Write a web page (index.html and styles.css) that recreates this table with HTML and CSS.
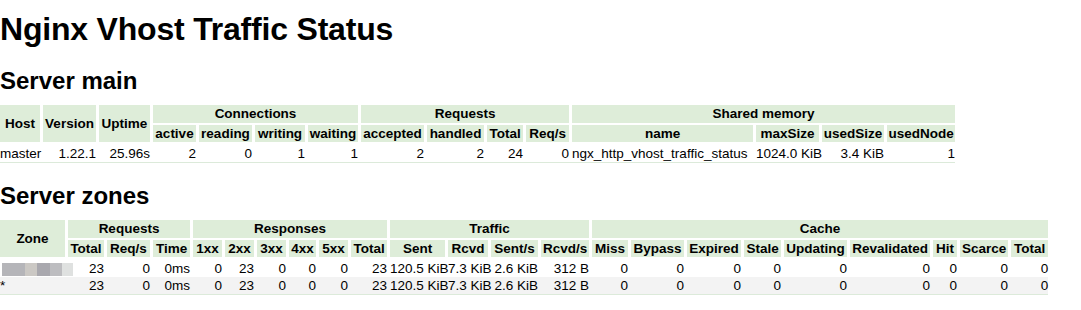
FILE: index.html
```html
<!DOCTYPE html>
<html lang="en">
<head>
<meta charset="utf-8">
<title>Nginx Vhost Traffic Status</title>
<link rel="stylesheet" href="styles.css">
</head>
<body>
<h1>Nginx Vhost Traffic Status</h1>

<h2>Server main</h2>
<table class="tbl main">
  <colgroup>
    <col><col><col><col><col><col><col><col><col><col><col><col><col><col><col>
  </colgroup>
  <thead>
    <tr>
      <th rowspan="2">Host</th>
      <th rowspan="2">Version</th>
      <th rowspan="2">Uptime</th>
      <th colspan="4">Connections</th>
      <th colspan="4">Requests</th>
      <th colspan="4">Shared memory</th>
    </tr>
    <tr>
      <th>active</th><th>reading</th><th>writing</th><th>waiting</th>
      <th>accepted</th><th>handled</th><th>Total</th><th>Req/s</th>
      <th>name</th><th>maxSize</th><th>usedSize</th><th>usedNode</th>
    </tr>
  </thead>
  <tbody>
    <tr>
      <td class="left">master</td>
      <td>1.22.1</td>
      <td>25.96s</td>
      <td>2</td><td>0</td><td>1</td><td>1</td>
      <td>2</td><td>2</td><td>24</td><td>0</td>
      <td class="left">ngx_http_vhost_traffic_status</td>
      <td>1024.0 KiB</td><td>3.4 KiB</td><td>1</td>
    </tr>
  </tbody>
</table>

<h2 class="zones-title">Server zones</h2>
<table class="tbl zones">
  <colgroup>
    <col><col><col><col><col><col><col><col><col><col><col><col><col><col><col><col><col><col><col><col><col><col><col>
  </colgroup>
  <thead>
    <tr>
      <th rowspan="2">Zone</th>
      <th colspan="3">Requests</th>
      <th colspan="6">Responses</th>
      <th colspan="4">Traffic</th>
      <th colspan="9">Cache</th>
    </tr>
    <tr>
      <th>Total</th><th>Req/s</th><th>Time</th>
      <th>1xx</th><th>2xx</th><th>3xx</th><th>4xx</th><th>5xx</th><th>Total</th>
      <th>Sent</th><th>Rcvd</th><th>Sent/s</th><th>Rcvd/s</th>
      <th>Miss</th><th>Bypass</th><th>Expired</th><th>Stale</th><th>Updating</th><th>Revalidated</th><th>Hit</th><th>Scarce</th><th>Total</th>
    </tr>
  </thead>
  <tbody>
    <tr>
      <td class="left"><span class="redact"></span></td>
      <td>23</td><td>0</td><td>0ms</td>
      <td>0</td><td>23</td><td>0</td><td>0</td><td>0</td><td>23</td>
      <td>120.5 KiB</td><td>7.3 KiB</td><td>2.6 KiB</td><td>312 B</td>
      <td>0</td><td>0</td><td>0</td><td>0</td><td>0</td><td>0</td><td>0</td><td>0</td><td>0</td>
    </tr>
    <tr>
      <td class="left">*</td>
      <td>23</td><td>0</td><td>0ms</td>
      <td>0</td><td>23</td><td>0</td><td>0</td><td>0</td><td>23</td>
      <td>120.5 KiB</td><td>7.3 KiB</td><td>2.6 KiB</td><td>312 B</td>
      <td>0</td><td>0</td><td>0</td><td>0</td><td>0</td><td>0</td><td>0</td><td>0</td><td>0</td>
    </tr>
  </tbody>
</table>
</body>
</html>
```

FILE: styles.css
```css
body {
  margin: 0;
  background: #fff;
  color: #000;
  font-family: "Liberation Sans", Arial, Helvetica, sans-serif;
}

h1 {
  font-size: 32px;
  line-height: 36px;
  font-weight: bold;
  letter-spacing: -0.2px;
  margin: 11px 0 0;
}

h2 {
  font-size: 24px;
  line-height: 28px;
  font-weight: bold;
  margin: 20px 0 8px;
}

h2.zones-title {
  margin-top: 19px;
}

.tbl {
  border-collapse: separate;
  border-spacing: 0;
  table-layout: fixed;
  margin-left: -3px;
  font-size: 13.5px;
  border-bottom: 1px solid #dceada;
}

.tbl th {
  background: #deedd9;
  border-left: 3px solid #fff;
  border-top: 2px solid #fff;
  padding: 0;
  line-height: 17.5px;
  font-weight: bold;
  text-align: center;
  white-space: nowrap;
}

.tbl td {
  padding: 0 0 0 3px;
  line-height: 17px;
  text-align: right;
  white-space: nowrap;
}

.tbl tbody tr:first-child td {
  padding-top: 3px;
}

.tbl tbody tr:nth-child(even) td {
  background: #f3f3f3;
}

.tbl td.left {
  text-align: left;
}

.redact {
  display: inline-block;
  vertical-align: middle;
  width: 71px;
  height: 13px;
  margin: 0 -12px 0 2px;
  background: linear-gradient(to right,
    #b5b5b9 0, #b5b5b9 23px,
    #cbc8c4 23px, #cbc8c4 35px,
    #a9a8ae 35px, #a9a8ae 48px,
    #bdbdc0 48px, #bdbdc0 60px,
    #dfe1e0 60px, #dfe1e0 71px);
  filter: blur(0.7px);
}

/* Server main column widths */
.main { width: 958px; }
.main col:nth-child(1)  { width: 43px; }
.main col:nth-child(2)  { width: 56px; }
.main col:nth-child(3)  { width: 54px; }
.main col:nth-child(4)  { width: 46px; }
.main col:nth-child(5)  { width: 56px; }
.main col:nth-child(6)  { width: 53px; }
.main col:nth-child(7)  { width: 53px; }
.main col:nth-child(8)  { width: 66px; }
.main col:nth-child(9)  { width: 60px; }
.main col:nth-child(10) { width: 39px; }
.main col:nth-child(11) { width: 46px; }
.main col:nth-child(12) { width: 184px; }
.main col:nth-child(13) { width: 66px; }
.main col:nth-child(14) { width: 65px; }
.main col:nth-child(15) { width: 71px; }

/* Server zones column widths */
.zones { width: 1051px; }
.zones col:nth-child(1)  { width: 68px; }
.zones col:nth-child(2)  { width: 39px; }
.zones col:nth-child(3)  { width: 46px; }
.zones col:nth-child(4)  { width: 40px; }
.zones col:nth-child(5)  { width: 32px; }
.zones col:nth-child(6)  { width: 32px; }
.zones col:nth-child(7)  { width: 32px; }
.zones col:nth-child(8)  { width: 30px; }
.zones col:nth-child(9)  { width: 32px; }
.zones col:nth-child(10) { width: 39px; }
.zones col:nth-child(11) { width: 58px; }
.zones col:nth-child(12) { width: 43px; }
.zones col:nth-child(13) { width: 50px; }
.zones col:nth-child(14) { width: 51px; }
.zones col:nth-child(15) { width: 39px; }
.zones col:nth-child(16) { width: 56px; }
.zones col:nth-child(17) { width: 57px; }
.zones col:nth-child(18) { width: 40px; }
.zones col:nth-child(19) { width: 66px; }
.zones col:nth-child(20) { width: 83px; }
.zones col:nth-child(21) { width: 27px; }
.zones col:nth-child(22) { width: 51px; }
.zones col:nth-child(23) { width: 40px; }
```
